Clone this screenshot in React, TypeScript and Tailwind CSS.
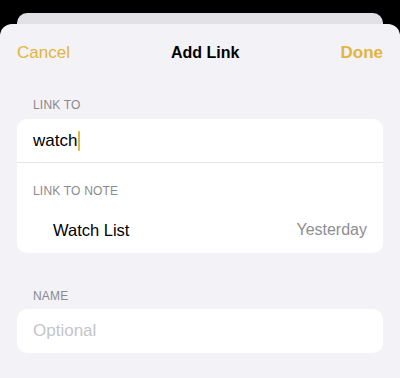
const font = { fontFamily: '"Liberation Sans", Arial, sans-serif' };

const SectionLabel = ({ children, inset = "px-[33px]" }: { children: string; inset?: string }) => (
    <div className={`${inset} text-[12px] leading-4 tracking-[0.2px] text-[#8a8a8e]`}>{children}</div>
);

const App = () => {
    return (
        <div className="w-[400px] h-[378px] bg-black overflow-hidden flex flex-col pt-[13px]" style={font}>
            {/* card behind the sheet */}
            <div className="mx-[17px] h-[11px] shrink-0 bg-[#e2e2e6] rounded-t-[10px]" />

            <div className="flex-1 flex flex-col bg-[#f2f2f7] rounded-t-[12px]">
                <div className="h-[57px] shrink-0 flex items-center justify-between px-[17px] text-[17px]">
                    <button type="button" className="text-[#e3b53b]">Cancel</button>
                    <span className="font-bold text-[16px] text-black">Add Link</span>
                    <button type="button" className="font-bold text-[#e3b53b]">Done</button>
                </div>

                <div className="mt-[16px] mb-[6px]">
                    <SectionLabel>LINK TO</SectionLabel>
                </div>
                <div className="mx-[17px] bg-white rounded-[10px] pb-px">
                    <div className="h-[43px] flex items-center px-4 text-[17px] text-black">
                        watch
                        <span className="inline-block w-[2px] h-[20px] ml-px bg-[#e3b53b] rounded-full" />
                    </div>
                    <div className="h-px bg-[#e6e6ea]" />
                    <div className="pt-[20px]">
                        <SectionLabel inset="px-4">LINK TO NOTE</SectionLabel>
                    </div>
                    <div className="mt-[9px] h-[44px] flex items-center justify-between pl-9 pr-4">
                        <span className="text-[16.5px] text-black">Watch List</span>
                        <span className="text-[16px] text-[#8e8e93]">Yesterday</span>
                    </div>
                </div>

                <div className="mt-[35px] mb-[5px]">
                    <SectionLabel>NAME</SectionLabel>
                </div>
                <div className="mx-[17px] h-[44px] bg-white rounded-[10px] flex items-center px-4">
                    <span className="text-[17px] text-[#c5c5c9]">Optional</span>
                </div>
            </div>
        </div>
    );
};

export default App;
